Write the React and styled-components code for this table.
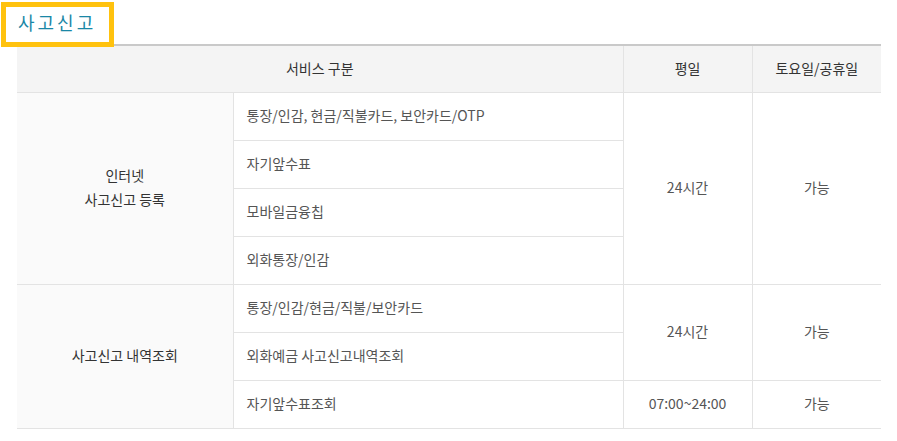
import React from "react";
import styled, { createGlobalStyle } from "styled-components";

const Global = createGlobalStyle`
  html, body { margin: 0; padding: 0; background: #fff; }
  body { font-family: "Noto Sans CJK KR", "Noto Sans", sans-serif; }
`;

const Page = styled.div`
  padding-top: 2px;
`;

const TitleBox = styled.h2`
  position: relative;
  z-index: 1;
  display: inline-block;
  box-sizing: border-box;
  margin: 0 0 0 1px;
  width: 113px;
  height: 45px;
  border: 5px solid #ffc20e;
  background: #fff;
  padding: 0 0 2px 12px;
  font-size: 18px;
  font-weight: 400;
  line-height: 31px;
  letter-spacing: 3px;
  color: #1a87a6;
`;

const Table = styled.table`
  margin: -3px 0 0 17px;
  width: 864px;
  border-collapse: collapse;
  table-layout: fixed;
  border-top: 2px solid #c9c9c9;
  font-size: 14px;
`;

const HeadCell = styled.th`
  height: 43px;
  padding: 0 0 3px;
  background: #f4f4f4;
  color: #333;
  font-weight: 400;
  text-align: center;
  border-bottom: 1px solid #e3e3e3;
  border-left: ${(p) => (p.$first ? "none" : "1px solid #e3e3e3")};
`;

const GroupCell = styled.td`
  padding: 0 0 3px;
  background: #fafafa;
  color: #333;
  text-align: center;
  line-height: 24px;
  border-bottom: 1px solid #e3e3e3;
`;

const ItemCell = styled.td`
  height: 44px;
  padding: 0 0 3px 13px;
  color: #555;
  text-align: left;
  border-bottom: 1px solid #e3e3e3;
  border-left: 1px solid #e3e3e3;
`;

const ValueCell = styled.td`
  padding: 0 0 3px;
  color: #555;
  text-align: center;
  border-bottom: 1px solid #e3e3e3;
  border-left: 1px solid #e3e3e3;
`;

export default function App() {
  return (
    <Page>
      <Global />
      <TitleBox>사고신고</TitleBox>
      <Table>
        <colgroup>
          <col style={{ width: 216 }} />
          <col style={{ width: 390 }} />
          <col style={{ width: 129 }} />
          <col style={{ width: 129 }} />
        </colgroup>
        <thead>
          <tr>
            <HeadCell $first colSpan={2}>서비스 구분</HeadCell>
            <HeadCell>평일</HeadCell>
            <HeadCell>토요일/공휴일</HeadCell>
          </tr>
        </thead>
        <tbody>
          <tr>
            <GroupCell rowSpan={4}>
              인터넷
              <br />
              사고신고 등록
            </GroupCell>
            <ItemCell>통장/인감, 현금/직불카드, 보안카드/OTP</ItemCell>
            <ValueCell rowSpan={4}>24시간</ValueCell>
            <ValueCell rowSpan={4}>가능</ValueCell>
          </tr>
          <tr>
            <ItemCell>자기앞수표</ItemCell>
          </tr>
          <tr>
            <ItemCell>모바일금융칩</ItemCell>
          </tr>
          <tr>
            <ItemCell>외화통장/인감</ItemCell>
          </tr>
          <tr>
            <GroupCell rowSpan={3}>사고신고 내역조회</GroupCell>
            <ItemCell>통장/인감/현금/직불/보안카드</ItemCell>
            <ValueCell rowSpan={2}>24시간</ValueCell>
            <ValueCell rowSpan={2}>가능</ValueCell>
          </tr>
          <tr>
            <ItemCell>외화예금 사고신고내역조회</ItemCell>
          </tr>
          <tr>
            <ItemCell>자기앞수표조회</ItemCell>
            <ValueCell>07:00~24:00</ValueCell>
            <ValueCell>가능</ValueCell>
          </tr>
        </tbody>
      </Table>
    </Page>
  );
}
